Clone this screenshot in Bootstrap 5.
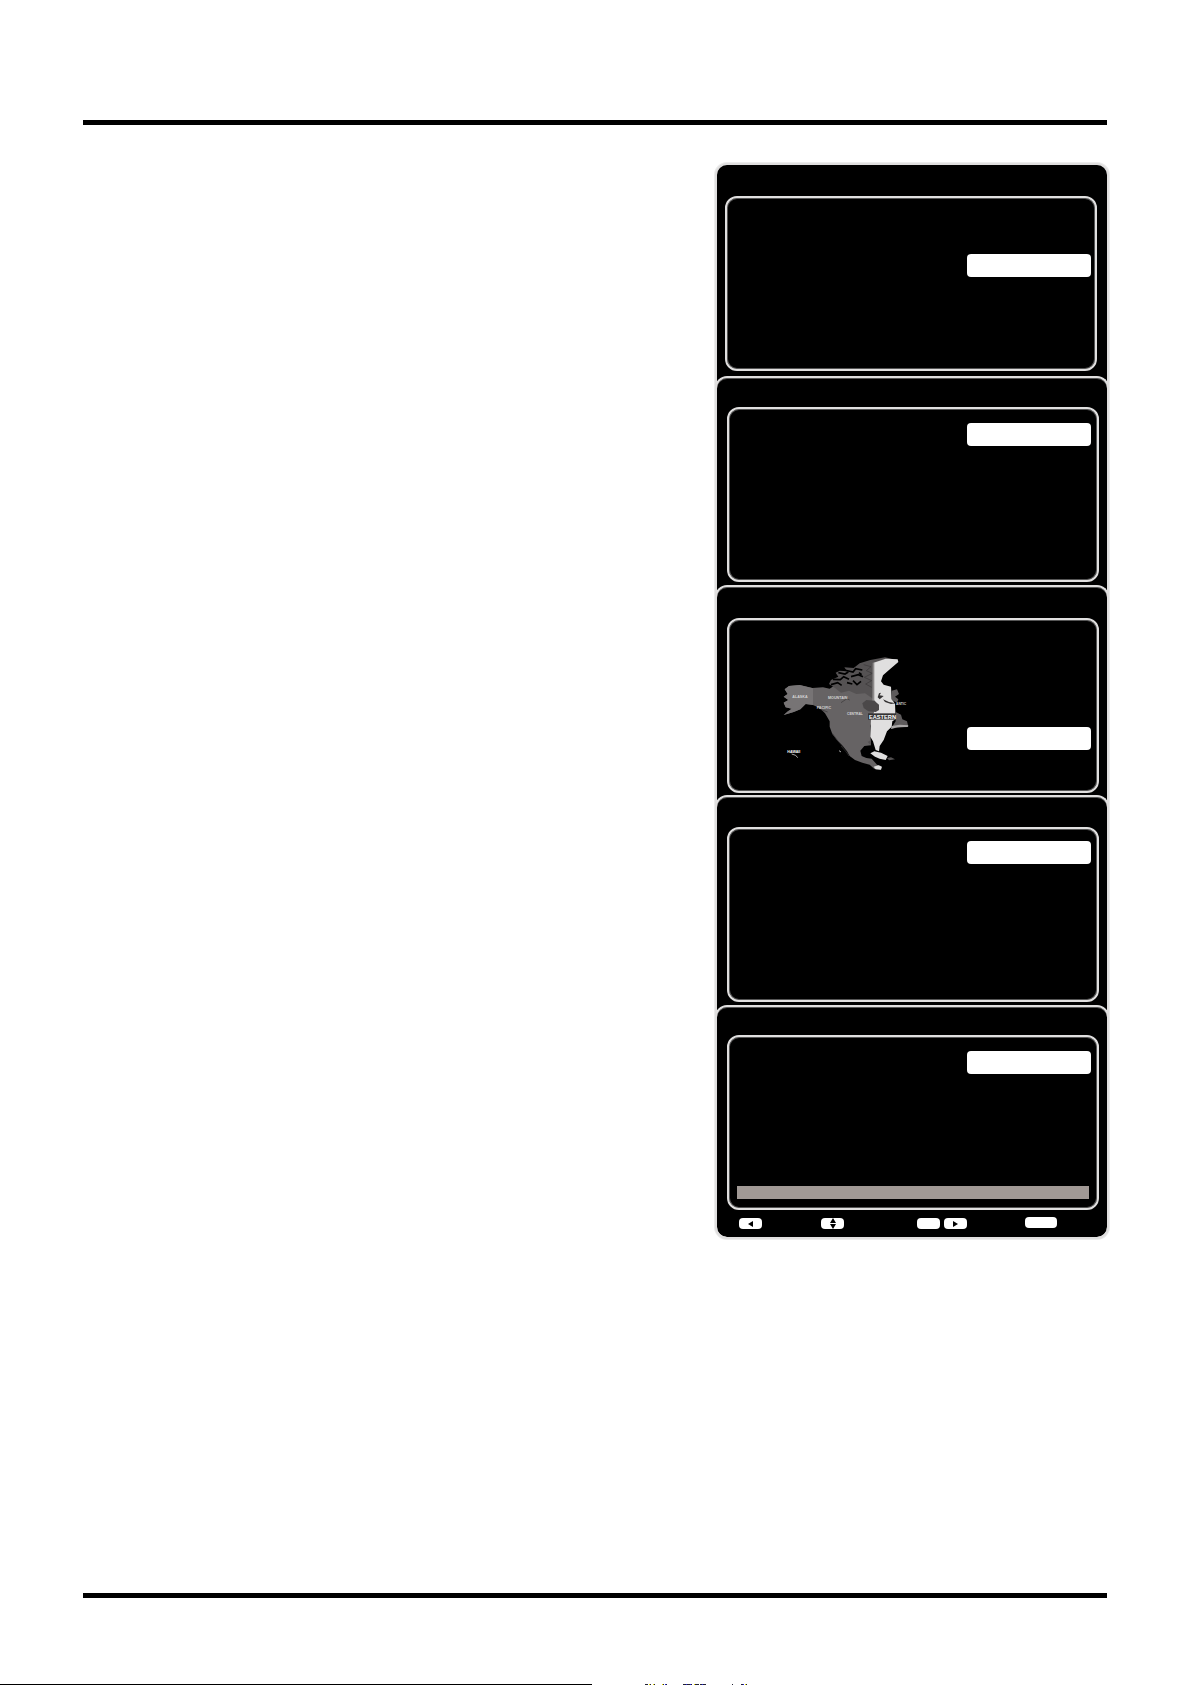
<!DOCTYPE html>
<html lang="en">
<head>
<meta charset="utf-8">
<meta name="viewport" content="width=device-width, initial-scale=1">
<title>On-screen menus</title>
<link href="https://cdn.jsdelivr.net/npm/bootstrap@5.3.0/dist/css/bootstrap.min.css" rel="stylesheet">
<style>
body { font-family: "Liberation Sans", Arial, sans-serif; background: #fff; }
.sheet { padding: 120px 84px 0 83px; }
.rule { height: 5px; background: #000; }
.osd { width: 394px; margin: 38px -2px 0 0; border: 2px solid #e0dfdf; border-radius: 12px; background: #000; box-shadow: 0 0 0 1px #ececec; }
.screen { height: 210px; padding: 30px 0 0 10px; }
.screen + .screen { margin: 0 -2px; border: 2px solid #e0dfdf; border-bottom: 0; border-radius: 12px 12px 0 0; box-shadow: inset 0 1px 0 #555; }
.screen.s-clock { height: 211px; padding: 31px 0 0 8px; }
.screen.s-mode { height: 209px; padding-top: 29px; }
.screen.s-zone { padding-top: 31px; }
.screen.s-last { height: 234px; margin-bottom: -2px; padding-top: 28px; border-bottom: 2px solid #e0dfdf; border-radius: 12px; }
.pane { width: 372px; height: 175px; border: 2px solid #e0dfdf; border-radius: 12px; padding: 12px 6px 0 7px; box-shadow: inset 0 0 0 1px #555; }
.s-clock .pane { padding-top: 56px; padding-right: 4px; }
.s-zone .pane { padding-top: 36px; }
.s-mode .pane, .s-last .pane { padding-top: 14px; }
.choice { width: 124px; height: 23px; border: 0; border-radius: 4px; background: #fff; }
.s-zone .choice { margin-top: 71px; }
.zones { width: 126px; height: 115px; margin-left: 47px; }
.hint { height: 13px; margin: 0 2px 9px 1px; background: #a19995; }
.keys { padding: 8px 0 0 12px; }
.key { width: 23px; height: 11px; padding: 0; border: 0; border-radius: 4px; background: #fff; }
.key svg { display: block; margin: auto; }
.key-move { margin-left: 59px; }
.key-enter { margin: 0 4px 0 73px; }
.key-wide { width: 32px; margin: -1px 0 1px 58px; }
.foot-gap { height: 86px; }
.edge-line { height: 1px; }
.edge-line .bar { width: 592px; background: #000; }
</style>
<script src="https://cdn.jsdelivr.net/npm/bootstrap@5.3.0/dist/js/bootstrap.bundle.min.js"></script>
</head>
<body>
<div class="d-flex flex-column min-vh-100">
  <div class="sheet d-flex flex-column flex-grow-1">
    <div class="rule"></div>
    <main class="d-flex justify-content-end">
      <div class="osd">
        <section class="screen s-clock">
          <div class="pane d-flex justify-content-end align-items-start"><button class="choice" type="button" aria-label="Selected item"></button></div>
        </section>
        <section class="screen s-mode">
          <div class="pane d-flex justify-content-end align-items-start"><button class="choice" type="button" aria-label="Selected item"></button></div>
        </section>
        <section class="screen s-zone">
          <div class="pane d-flex justify-content-between align-items-start">
            <svg class="zones" viewBox="40 50 378 345" preserveAspectRatio="none" role="img" aria-label="Time zones">
              <path fill="#666364" d="M45 150 58 140 90 137 128 146 160 144 180 148 198 136 214 144 238 132 262 140 278 128 310 120 312 230 302 260 303 296 304 318 284 320 272 334 276 350 290 356 306 358 322 376 334 380 334 391 314 389 300 376 278 370 256 362 240 350 232 336 216 316 202 302 188 284 180 262 180 246 166 222 150 206 128 196 108 194 92 210 72 218 42 227 54 216 66 208 48 204 42 190 56 182 42 172 54 164Z"/>
              <path fill="#777475" d="M45 150 58 140 90 137 130 147 130 197 108 194 92 210 72 218 42 227 66 208 48 204 42 190 56 182 42 172 54 164Z"/>
              <path fill="#555253" d="M178 134 184 122 206 112 198 100 210 94 232 96 224 84 252 86 270 72 302 62 346 54 382 62 312 72 312 180 286 162 260 164 238 154 214 160 196 146Z"/>
              <path fill="none" stroke="#000" stroke-width="5" d="M184 136 204 130 216 138M190 120 212 121 222 112 238 120M206 100 226 104 236 98M224 92 250 98 258 88 278 92M244 112 266 106 280 112M250 124 262 136 274 126M232 130 248 134M268 100 276 106"/>
              <path fill="none" stroke="#393738" stroke-width="2" d="M282 76 304 82 290 94 308 102 284 114 306 124 288 134 306 144M214 190 232 178 240 182M152 210 174 218M214 320 230 338 238 350M188 282 204 304 222 324"/>
              <path fill="#e0dfdf" d="M312 70 348 58 384 60 386 68 358 92 340 108 334 126 342 136 364 142 366 178 376 194 378 240 368 246 366 262 352 276 342 302 330 320 328 336 318 332 310 306 302 292 304 240 312 220Z"/>
              <path fill="#8d8a8a" d="M309 70H314V182L322 194 318 202 308 190Z"/>
              <path fill="#4b4849" d="M278 192 290 182 314 184 328 196 328 212 318 218 296 216 282 206Z"/>
              <path fill="#343233" d="M324 174 328 162 334 160 330 168 342 170 330 180ZM340 180 358 188 378 192 364 194 346 188Z"/>
              <path fill="#5e5b5c" d="M366 154 382 150 388 164 376 172 386 180 382 190 366 182ZM378 218 394 226 398 240 412 246 416 262 392 264 364 268 378 246Z"/>
              <path fill="#aaa8a8" d="M366 260 390 256 416 258 414 263 382 264 364 269Z"/>
              <path fill="#e0dfdf" d="M302 342 314 336 334 340 354 350 348 362 330 358 316 352ZM312 382 326 378 337 382 334 391 318 390Z"/>
              <path fill="#555253" d="M352 356 364 354 376 360 358 363ZM294 308 304 302 304 318Z"/>
              <path fill="none" stroke="#aaa" stroke-width="3" d="M66 344 78 348 84 355M208 334 214 338"/>
              <path fill="#343233" d="M295 222H379V241H295Z"/>
              <g font-family="Liberation Sans, Arial, sans-serif" font-weight="700" fill="#d4d3d3" font-size="11">
                <text x="68" y="175">ALASKA</text><text x="175" y="178">MOUNTAIN</text><text x="141" y="209">PACIFIC</text><text x="232" y="227" font-size="10">CENTRAL</text><text x="379" y="198" font-size="10">ANTIC</text><text x="53" y="340" fill="#fff">HAWAII</text>
                <text x="298" y="238" font-size="17" fill="#fff">EASTERN</text>
              </g>
            </svg>
            <button class="choice" type="button" aria-label="Selected item"></button>
          </div>
        </section>
        <section class="screen">
          <div class="pane d-flex justify-content-end align-items-start"><button class="choice" type="button" aria-label="Selected item"></button></div>
        </section>
        <section class="screen s-last">
          <div class="pane d-flex flex-column justify-content-between">
            <button class="choice align-self-end" type="button" aria-label="Selected item"></button>
            <div class="hint"></div>
          </div>
          <div class="keys d-flex">
            <button class="key" type="button" aria-label="Left"><svg width="23" height="11"><path d="M9 6 14 3V9Z"/></svg></button>
            <button class="key key-move" type="button" aria-label="Up or down"><svg width="23" height="11"><path d="M9 5 12 0 15 5ZM9 6 12 11 15 6Z"/></svg></button>
            <button class="key key-enter" type="button" aria-label="Enter"></button>
            <button class="key" type="button" aria-label="Right"><svg width="23" height="11"><path d="M14 6 9 3V9Z"/></svg></button>
            <button class="key key-wide" type="button" aria-label="Menu"></button>
          </div>
        </section>
      </div>
    </main>
    <div class="rule mt-auto"></div>
  </div>
  <div class="foot-gap"></div>
  <footer class="edge-line d-flex">
    <div class="bar"></div>
    <svg class="d-block" width="170" height="1" shape-rendering="crispEdges" aria-hidden="true">
      <path stroke="#223" d="M53 .5h3M58 .5h1M62 .5h1M71 .5h1M74 .5h1M91 .5h3M95 .5h3M99 .5h1M103 .5h4M108 .5h2M111 .5h3M140 .5h1M149 .5h2M154 .5h1"/>
      <path stroke="#e6d800" d="M57 .5h1M61 .5h1M70 .5h1M102 .5h1M153 .5h1"/>
      <path stroke="#2020e0" d="M73 .5h1M94 .5h1M98 .5h1M110 .5h1M151 .5h1"/>
    </svg>
  </footer>
</div>
</body>
</html>
